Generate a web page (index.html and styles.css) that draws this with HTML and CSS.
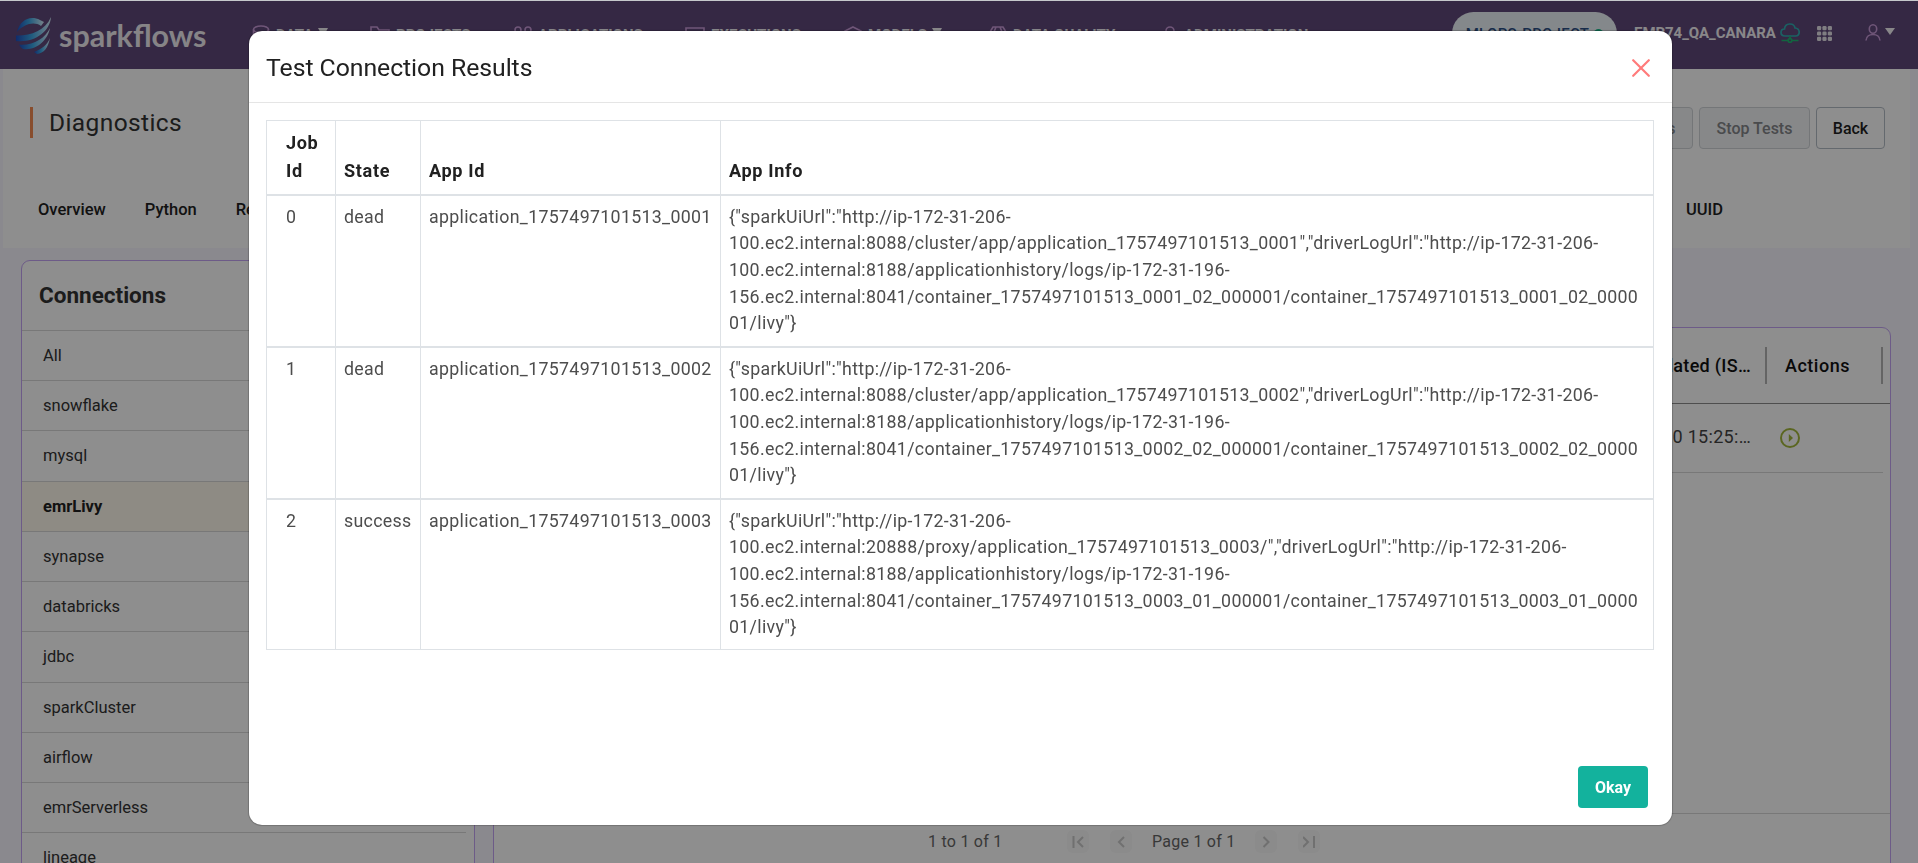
FILE: index.html
```html
<!DOCTYPE html>
<html lang="en">
<head>
<meta charset="utf-8">
<title>Diagnostics</title>
<link rel="stylesheet" href="styles.css">
</head>
<body>
<div class="page">
  <header class="navbar">
    <div class="brand">
      <svg class="brand-mark" width="36" height="38" viewBox="0 0 36 38">
        <defs><linearGradient id="g" x1="0" x2="1" y1="0" y2="0"><stop offset="0" stop-color="#1e4fc0"/><stop offset=".45" stop-color="#3aa6e4"/><stop offset="1" stop-color="#d5ecf8"/></linearGradient></defs>
        <path d="M1 15C4 3 14-2 24 3l4 2-3 4C18 4 8 7 1 15z" fill="url(#g)"/>
        <path d="M0 18.500C14 19 29 14 35 0C34 15 18 26 0 24C0 22 0 20 0 18.500z" fill="url(#g)"/>
        <path d="M3 27.500C16 29 29 22 34 11C32 23 20 34 7 32C5 31 4 29 3 27.500z" fill="url(#g)"/>
        <path d="M18 35C26 32 31 28 34 21C32 31 28 36 21 37z" fill="url(#g)"/>
      </svg>
      <span class="brand-name">sparkflows</span>
    </div>
    <nav class="menu">
      <a class="item"><svg width="18" height="20" viewBox="0 0 18 20"><ellipse cx="9" cy="4.5" rx="7.5" ry="3.5"/><path d="M1.5 4.5v11c0 5 15 5 15 0v-11M1.5 10c0 4 15 4 15 0"/></svg><span>DATA</span><i class="caret"></i></a>
      <a class="item"><svg width="20" height="20" viewBox="0 0 20 20"><path d="M1 17V2h6l2 3h10v12z"/></svg><span>PROJECTS</span></a>
      <a class="item"><svg width="18" height="18" viewBox="0 0 18 18"><rect x="1" y="1" width="6" height="6" rx="3"/><rect x="11" y="1" width="6" height="6" rx="3"/><rect x="1" y="11" width="6" height="6" rx="3"/><rect x="11" y="11" width="6" height="6" rx="3"/></svg><span>APPLICATIONS</span></a>
      <a class="item"><svg width="20" height="16" viewBox="0 0 20 16"><path d="M1 1h18v14H1zM5 5l3 3-3 3"/></svg><span>EXECUTIONS</span></a>
      <a class="item"><svg width="18" height="18" viewBox="0 0 18 18"><path d="M9 1l8 4v8l-8 4-8-4V5zM1 5l8 4 8-4M9 9v8"/></svg><span>MODELS</span><i class="caret"></i></a>
      <a class="item"><svg width="18" height="18" viewBox="0 0 18 18"><path d="M4 1h10l3 5-8 11L1 6zM7 1L5 6l4 11 4-11-2-5M1 6h16"/></svg><span>DATA QUALITY</span></a>
      <a class="item"><svg width="16" height="18" viewBox="0 0 16 18"><circle cx="8" cy="5" r="4"/><path d="M1 17c0-9 14-9 14 0"/></svg><span>ADMINISTRATION</span></a>
    </nav>
    <div class="project-pill"><span>MLOPS-PROJECT</span><i class="dot"></i></div>
    <div class="cluster"><span>EMR74_QA_CANARA</span>
      <svg width="20" height="20" viewBox="0 0 20 20" fill="none" stroke-width="1.7"><path d="M5 13C-.5 13 0 6 4.500 6C5-.5 14-.5 15 5C20.500 5.500 20.500 13 15.500 13z" stroke="#31aeb2"/><path d="M10 13v3M1.500 17.500H8M12 17.500h6.500" stroke="#22b573"/><circle cx="10" cy="17.500" r="1.800" stroke="#22b573"/></svg>
    </div>
    <svg class="apps" width="15" height="15" viewBox="0 0 15 15"><g fill="#e6e2ea"><rect x="0" y="0" width="4.200" height="4.200" rx="1.300"/><rect x="5.400" y="0" width="4.200" height="4.200" rx="1.300"/><rect x="10.800" y="0" width="4.200" height="4.200" rx="1.300"/><rect x="0" y="5.400" width="4.200" height="4.200" rx="1.300"/><rect x="5.400" y="5.400" width="4.200" height="4.200" rx="1.300"/><rect x="10.800" y="5.400" width="4.200" height="4.200" rx="1.300"/><rect x="0" y="10.800" width="4.200" height="4.200" rx="1.300"/><rect x="5.400" y="10.800" width="4.200" height="4.200" rx="1.300"/><rect x="10.800" y="10.800" width="4.200" height="4.200" rx="1.300"/></g></svg>
    <div class="user"><svg width="16" height="17" viewBox="0 0 16 17" fill="none" stroke="#c89ad8" stroke-width="1.600"><ellipse cx="8" cy="5" rx="3.700" ry="4.200"/><path d="M1 16.500c.5-8 13.500-8 14 0"/></svg><i class="caret"></i></div>
  </header>

  <section class="page-head">
    <div class="title-row">
      <h1>Diagnostics</h1>
      <div class="actions">
        <button class="btn disabled">Run Tests</button>
        <button class="btn disabled stop">Stop Tests</button>
        <button class="btn">Back</button>
      </div>
    </div>
    <div class="tabs"><a>Overview</a><a>Python</a><a>Resources</a><a class="last">UUID</a></div>
  </section>

  <main class="content">
    <aside class="connections">
      <h2>Connections</h2>
      <ul>
        <li>All</li><li>snowflake</li><li>mysql</li><li class="active">emrLivy</li><li>synapse</li><li>databricks</li><li>jdbc</li><li>sparkCluster</li><li>airflow</li><li>emrServerless</li><li>lineage</li>
      </ul>
    </aside>
    <section class="grid">
      <div class="grid-head"><div class="cell date">Updated (IS…</div><div class="cell act">Actions</div></div>
      <div class="grid-row"><div class="cell date">2025-09-10 15:25:…</div><div class="cell act"><svg width="20" height="20" viewBox="0 0 20 20"><circle cx="10" cy="10" r="9" fill="none" stroke="#a3b83c" stroke-width="2"/><path d="M8.800 6l4.200 4-4.200 4z" fill="#a3b83c"/></svg></div></div>
      <div class="grid-foot">
        <span class="count">1 to 1 of 1</span>
        <div class="pager">
          <b><svg width="12" height="12" viewBox="0 0 12 12"><path d="M1.500 0v12M11 1L6 6l5 5"/></svg></b>
          <b><svg width="12" height="12" viewBox="0 0 12 12"><path d="M9 1L4 6l5 5"/></svg></b>
          <span class="pages">Page 1 of 1</span>
          <b><svg width="12" height="12" viewBox="0 0 12 12"><path d="M3.500 1l5 5-5 5"/></svg></b>
          <b><svg width="12" height="12" viewBox="0 0 12 12"><path d="M0 1l5 5-5 5M11 0v12"/></svg></b>
        </div>
      </div>
    </section>
  </main>
</div>

<div class="backdrop"></div>
<div class="modal">
  <div class="modal-head">
    <h3>Test Connection Results</h3>
    <svg class="close" width="18" height="18" viewBox="0 0 18 18"><path d="M1.200 1.200l15.600 15.600M16.800 1.200L1.200 16.800"/></svg>
  </div>
  <div class="modal-body">
    <table>
      <colgroup><col class="c-job"><col class="c-state"><col class="c-app"><col></colgroup>
      <thead><tr><th>Job<br>Id</th><th>State</th><th>App Id</th><th>App Info</th></tr></thead>
      <tbody>
        <tr><td>0</td><td>dead</td><td>application_1757497101513_0001</td><td>{"sparkUiUrl":"http://ip-172-31-206-<br>100.ec2.internal:8088/cluster/app/application_1757497101513_0001","driverLogUrl":"http://ip-172-31-206-<br>100.ec2.internal:8188/applicationhistory/logs/ip-172-31-196-<br>156.ec2.internal:8041/container_1757497101513_0001_02_000001/container_1757497101513_0001_02_0000<br>01/livy"}</td></tr>
        <tr><td>1</td><td>dead</td><td>application_1757497101513_0002</td><td>{"sparkUiUrl":"http://ip-172-31-206-<br>100.ec2.internal:8088/cluster/app/application_1757497101513_0002","driverLogUrl":"http://ip-172-31-206-<br>100.ec2.internal:8188/applicationhistory/logs/ip-172-31-196-<br>156.ec2.internal:8041/container_1757497101513_0002_02_000001/container_1757497101513_0002_02_0000<br>01/livy"}</td></tr>
        <tr><td>2</td><td>success</td><td>application_1757497101513_0003</td><td>{"sparkUiUrl":"http://ip-172-31-206-<br>100.ec2.internal:20888/proxy/application_1757497101513_0003/","driverLogUrl":"http://ip-172-31-206-<br>100.ec2.internal:8188/applicationhistory/logs/ip-172-31-196-<br>156.ec2.internal:8041/container_1757497101513_0003_01_000001/container_1757497101513_0003_01_0000<br>01/livy"}</td></tr>
      </tbody>
    </table>
  </div>
  <div class="modal-foot"><button class="ok">Okay</button></div>
</div>
</body>
</html>
```
FILE: styles.css
```css
* { box-sizing: border-box; }
body { margin: 0; height: 863px; overflow: hidden; font-family: Roboto, sans-serif; background: #f8f6ff; color: #333; }
h1, h2, h3, ul { margin: 0; padding: 0; }
.page { height: 863px; overflow: hidden; display: flex; flex-direction: column; border-top: 1px solid #c6c9cc; }

.navbar { flex: none; height: 68px; background: #5f487a; display: flex; align-items: flex-start; color: #f5f3f7; white-space: nowrap; }
.brand { width: 252px; padding: 16px 0 0 16px; display: flex; gap: 7px; }
.brand-mark { flex: none; }
.brand-name { font: 700 30.5px/36px Lato, sans-serif; color: #f0eef2; }
.menu { display: grid; grid-template-columns: 118px 144px 171px 159px 145px 173px 290px; font-size: 15px; font-weight: 700; }
.item { display: flex; align-items: center; gap: 5px; height: 68px; padding-bottom: 1px; }
.item svg { fill: none; stroke: #c89ad8; stroke-width: 1.6; }
.item span { margin-left: 1px; }
.item .caret { margin: -4px 0 0 0; border-width: 9px 5.5px 0; }
.caret { width: 0; height: 0; border: 5px solid transparent; border-top: 7px solid #f5f3f7; border-bottom: 0; }
.project-pill { width: 165px; height: 43px; margin-top: 11px; border-radius: 22px; background: #eef5fa; color: #2b4f86; font-size: 15px; font-weight: 500; display: flex; align-items: center; justify-content: center; gap: 5px; }
.project-pill span { letter-spacing: .3px; }
.dot { width: 9px; height: 9px; border-radius: 50%; background: #16b98a; }
.cluster { margin-left: 17px; margin-top: 22px; display: flex; gap: 5px; font-size: 15px; font-weight: 700; line-height: 20px; }
.cluster span { width: 141px; letter-spacing: -.05px; }
.apps { margin: 25px 0 0 17px; }
.user { margin: 23px 0 0 33px; display: flex; align-items: flex-start; gap: 4px; }
.user .caret { margin-top: 4px; }

.page-head { flex: none; height: 179px; margin: 0 8px 0 3px; background: #fff; }
.title-row { display: flex; justify-content: space-between; padding: 38px 25px 0 27px; }
h1 { height: 31px; border-left: 3px solid #f58a52; padding-left: 16px; font-size: 24.5px; font-weight: 400; line-height: 31px; letter-spacing: .4px; }
.actions { display: flex; gap: 6px; }
.btn { height: 42px; width: 69px; padding: 0; border: 1px solid #b4bcc5; border-radius: 4px; background: #fff; font: 500 16px Roboto, sans-serif; color: #222; }
.btn.disabled { width: 106px; background: #f3f5f7; border-color: #d0d4d8; color: #85878a; }
.btn.stop { width: 111px; }
.tabs { display: flex; gap: 39px; margin-top: 50px; padding: 0 187px 0 35px; font-size: 16.5px; line-height: 22px; font-weight: 500; color: #222; }
.tabs .last { margin-left: auto; }

.content { flex: 1; min-height: 0; display: flex; gap: 18px; padding: 12px 27px 0 21px; }
.connections { width: 454px; height: 700px; border: 1px solid #c4a4f4; border-radius: 9px; background: #fff; overflow: hidden; }
h2 { height: 69px; padding-left: 17px; font-size: 22.5px; line-height: 68px; font-weight: 700; }
ul { list-style: none; margin-right: 8px; }
li { height: 50.22px; border-top: 1px solid #d8d8d8; padding-left: 21px; font-size: 16.5px; line-height: 50.6px; }
li.active { background: #fffaed; font-weight: 700; color: #222; }
.grid { flex: 1; height: 700px; margin-top: 67px; border: 1px solid #c4a4f4; border-radius: 9px; background: #fff; display: flex; flex-direction: column; }
.grid-head, .grid-row { flex: none; display: flex; justify-content: flex-end; padding-right: 7px; letter-spacing: .3px; }
.grid-head { height: 76px; align-items: center; border-bottom: 1px solid #8c8c8c; font-size: 18px; font-weight: 500; color: #111; }
.grid-head .cell { height: 37px; line-height: 37px; border-right: 2px solid #b4b4b4; }
.grid-head .act { letter-spacing: .5px; }
.grid-row { height: 69px; margin-right: 7px; padding-right: 0; border-bottom: 1px solid #d8d8d8; font-size: 18px; line-height: 66px; color: #444; }
.cell.date { width: 200px; padding-right: 14px; text-align: right; }
.cell.act { width: 116px; padding-left: 18px; }
.grid-row .date { padding-right: 16px; }
.grid-row .act { display: flex; align-items: center; padding-left: 13px; }
.grid-foot { margin-top: 340px; height: 50px; border-top: 1px solid #d8d8d8; display: flex; padding: 16px 0 0 434px; font-size: 16px; line-height: 23px; color: #666; letter-spacing: .25px; }
.count { width: 139px; }
.pager { display: flex; }
.pager b { width: 22px; height: 23px; border-radius: 6px; background: #f9f9f9; display: flex; align-items: center; justify-content: center; margin-right: 20.5px; }
.pager svg { fill: none; stroke: #cacaca; stroke-width: 2; }
.pages { width: 103px; }

.backdrop { position: fixed; inset: 1px 0 0 0; background: rgba(0, 0, 0, .443); }
.modal { position: fixed; left: 249px; top: 31px; width: 1423px; height: 794px; background: #fff; border-radius: 13px; box-shadow: 0 0 1px 1px rgba(0, 0, 0, .2); display: flex; flex-direction: column; }
.modal-head { height: 72px; border-bottom: 1px solid #e5e5e5; display: flex; justify-content: space-between; padding: 21px 22px 0 17px; }
h3 { font-size: 24.8px; line-height: 31px; font-weight: 400; color: #212121; letter-spacing: -.05px; }
.close { margin-top: 7px; fill: none; stroke: #ff7b7b; stroke-width: 2.2; stroke-linecap: round; }
.modal-body { flex: 1; padding: 17px 18px 0 17px; }
table { width: 1388px; border-collapse: collapse; table-layout: fixed; border: 1px solid #dee2e6; font-size: 17.78px; line-height: 26.67px; letter-spacing: .32px; color: #4d4d4d; }
.c-job { width: 69px; }
.c-state { width: 85px; }
.c-app { width: 300px; }
th, td { border: 1px solid #dee2e6; padding: 8px; text-align: left; vertical-align: top; white-space: nowrap; }
th { height: 74px; padding: 6px 8px 9px; vertical-align: bottom; font-size: 18.1px; line-height: 28px; letter-spacing: .65px; font-weight: 700; color: #212121; }
td { height: 152px; padding: 8.3px 8px 7.7px; border-top-width: 2px; }
tr:last-child td { height: 151px; padding-bottom: 6.7px; }
th:first-child, td:first-child { padding-left: 19px; }
.modal-foot { padding: 0 24px 17px; display: flex; justify-content: flex-end; }
.ok { width: 70px; height: 42px; padding: 0; border: 0; border-radius: 4px; background: #13b29d; color: #fff; font: 700 16px Roboto, sans-serif; }
```
